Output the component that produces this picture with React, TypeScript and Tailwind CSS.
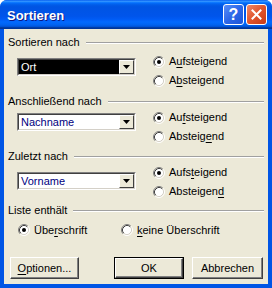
import React from 'react';

type RadioProps = {
  checked?: boolean;
  label: React.ReactNode;
};

function RadioDot({ checked }: { checked?: boolean }) {
  return (
    <svg width="12" height="12" viewBox="0 0 12 12" className="shrink-0">
      <circle cx="6" cy="6" r="4.5" fill="#ffffff" />
      <path d="M2.11 9.89 A5.5 5.5 0 0 1 9.89 2.11" fill="none" stroke="#808080" strokeWidth="1" />
      <path d="M9.89 2.11 A5.5 5.5 0 0 1 2.11 9.89" fill="none" stroke="#ffffff" strokeWidth="1" />
      <path d="M2.82 9.18 A4.5 4.5 0 0 1 9.18 2.82" fill="none" stroke="#404040" strokeWidth="1" />
      <path d="M9.18 2.82 A4.5 4.5 0 0 1 2.82 9.18" fill="none" stroke="#d4d0c8" strokeWidth="1" />
      {checked && <circle cx="6" cy="6" r="2" fill="#000000" />}
    </svg>
  );
}

function Radio({ checked, label }: RadioProps) {
  return (
    <div className="flex items-center gap-[4px] h-[19px]">
      <RadioDot checked={checked} />
      <span>{label}</span>
    </div>
  );
}

function Mn({ text, at }: { text: string; at: number }) {
  // underline the mnemonic letter
  return (
    <>
      {text.slice(0, at)}
      <span className="underline underline-offset-[2px]">{text[at]}</span>
      {text.slice(at + 1)}
    </>
  );
}

function Combo({ value, selected }: { value: string; selected?: boolean }) {
  return (
    <div className="w-[119px] h-[18px] flex border border-t-[#808080] border-l-[#808080] border-b-white border-r-white">
      <div className="flex-1 flex border border-t-[#404040] border-l-[#404040] border-b-[#d4d0c8] border-r-[#d4d0c8] bg-white">
        <div
          className={`flex-1 flex items-center pl-[2px] ${
            selected ? 'bg-black text-white' : 'text-[#000080]'
          }`}
        >
          {value}
        </div>
        <div className="w-[15px] flex items-center justify-center bg-[#ece9d8] border border-t-white border-l-white border-b-[#404040] border-r-[#404040]">
          <svg width="7" height="4" viewBox="0 0 7 4">
            <path d="M0 0h7L3.5 4z" fill="#000" />
          </svg>
        </div>
      </div>
    </div>
  );
}

function GroupHeader({ title, className }: { title: string; className?: string }) {
  return (
    <div className={`flex items-center h-[13px] pl-[4px] pr-[4px] ${className ?? ''}`}>
      <span className="whitespace-nowrap pr-[6px]">{title}</span>
      <div className="flex-1 h-[2px] border-t border-t-[#a0a0a0] border-b border-b-white" />
    </div>
  );
}

function Button({ children, isDefault, className }: { children: React.ReactNode; isDefault?: boolean; className?: string }) {
  return (
    <div className={`h-[22px] ${isDefault ? 'border border-black' : ''} ${className ?? ''}`}>
      <div className="h-full flex items-center justify-center bg-[#ece9d8] border border-t-white border-l-white border-b-[#404040] border-r-[#404040] shadow-[inset_-1px_-1px_0_#808080]">
        {children}
      </div>
    </div>
  );
}

export default function App() {
  return (
    <div className="w-[272px] h-[288px] flex flex-col rounded-t-[7px] overflow-hidden bg-[#0055e5] font-['Liberation_Sans',Arial,sans-serif] text-[11px] text-black leading-[13px]">
      {/* title bar */}
      <div className="h-[29px] shrink-0 flex items-center pl-[7px] pr-[5px] bg-[linear-gradient(to_bottom,#0058ee_0%,#3593ff_4%,#288eff_6%,#127dff_8%,#036ffc_10%,#0262ee_14%,#0057e5_20%,#0054e3_24%,#0055eb_56%,#005bf5_66%,#026afe_76%,#0062ef_86%,#0052d6_92%,#0040ab_94%,#003092_100%)]">
        <span className="flex-1 pt-[2px] text-white font-bold text-[13px] [text-shadow:1px_1px_0_#0a1883]">
          Sortieren
        </span>
        <div className="flex gap-[2px]">
          <div className="w-[21px] h-[21px] rounded-[3px] border border-white flex items-center justify-center bg-[linear-gradient(135deg,#5a8ef8_0%,#2c67e8_50%,#1d55d8_100%)] text-white font-bold text-[16px]">
            ?
          </div>
          <div className="w-[21px] h-[21px] rounded-[3px] border border-white flex items-center justify-center bg-[linear-gradient(135deg,#f08868_0%,#e0542c_50%,#c83a16_100%)]">
            <svg width="11" height="11" viewBox="0 0 11 11">
              <path d="M1.5 1.5l8 8M9.5 1.5l-8 8" stroke="#fff" strokeWidth="2" strokeLinecap="square" />
            </svg>
          </div>
        </div>
      </div>

      {/* client area */}
      <div className="flex-1 mx-[4px] mb-[4px] bg-[#ece9d8] flex flex-col">
        <GroupHeader title="Sortieren nach" className="mt-[7px]" />
        <div className="flex items-start h-[39px]">
          <div className="w-[149px] pl-[13px] mt-[9px]">
            <Combo value="Ort" selected />
          </div>
          <div className="mt-[3px] flex flex-col">
            <Radio checked label={<Mn text="Aufsteigend" at={1} />} />
            <Radio label={<Mn text="Absteigend" at={1} />} />
          </div>
        </div>

        <GroupHeader title="Anschließend nach" className="mt-[7px]" />
        <div className="flex items-start h-[38px]">
          <div className="w-[149px] pl-[13px] mt-[5px]">
            <Combo value="Nachname" />
          </div>
          <div className="flex flex-col">
            <Radio checked label={<Mn text="Aufsteigend" at={2} />} />
            <Radio label={<Mn text="Absteigend" at={7} />} />
          </div>
        </div>

        <GroupHeader title="Zuletzt nach" className="mt-[4px]" />
        <div className="flex items-start h-[38px]">
          <div className="w-[149px] pl-[13px] mt-[9px]">
            <Combo value="Vorname" />
          </div>
          <div className="flex flex-col">
            <Radio checked label={<Mn text="Aufsteigend" at={4} />} />
            <Radio label={<Mn text="Absteigend" at={9} />} />
          </div>
        </div>

        <GroupHeader title="Liste enthält" className="mt-[3px]" />
        <div className="flex items-center mt-[4px] h-[18px] pl-[14px]">
          <div className="w-[103px]">
            <Radio checked label={<Mn text="Überschrift" at={3} />} />
          </div>
          <Radio label={<Mn text="keine Überschrift" at={0} />} />
        </div>

        <div className="flex mt-[18px] pl-[6px]">
          <Button className="w-[69px]">
            <Mn text="Optionen..." at={0} />
          </Button>
          <Button isDefault className="w-[70px] ml-[35px]">
            OK
          </Button>
          <Button className="w-[71px] ml-[8px]">Abbrechen</Button>
        </div>
      </div>
    </div>
  );
}
